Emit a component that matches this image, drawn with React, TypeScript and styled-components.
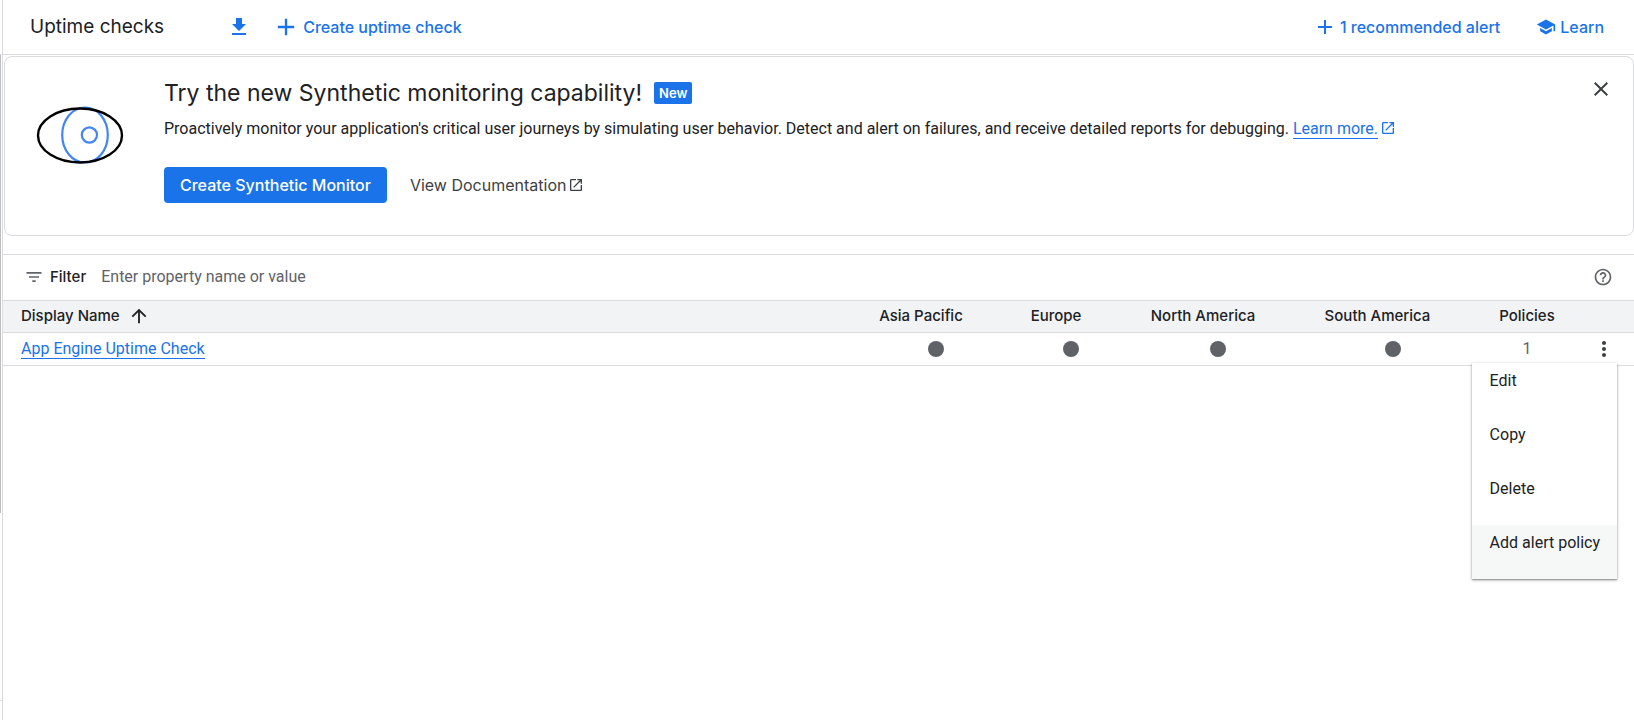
import React from "react";
import styled, { createGlobalStyle } from "styled-components";
import {
  MdAdd,
  MdArrowUpward,
  MdClose,
  MdFileDownload,
  MdFilterList,
  MdHelpOutline,
  MdMoreVert,
  MdOpenInNew,
  MdSchool,
} from "react-icons/md";

const display = `Inter, "Open Sans", sans-serif`;
const body = `Roboto, "Liberation Sans", sans-serif`;
const blue = "#1a73e8";
const ink = "#202124";
const grey = "#5f6368";
const line = "#dadce0";

const GlobalStyle = createGlobalStyle`
  *, *::before, *::after { box-sizing: border-box; }
  body { margin: 0; background: #fff; color: ${ink}; font: 400 16px/20px ${body}; }
  button, input { font: inherit; color: inherit; }
  button { border: 0; padding: 0; background: none; cursor: pointer; }
  svg { display: block; flex: none; }
`;

const Shell = styled.div`
  display: flex;
  min-height: 100vh;
`;

const NavEdge = styled.div`
  display: flex;
  flex-direction: column;
  width: 3px;
  border-right: 1px solid ${line};
`;

const NavTop = styled.div`
  height: 55px;
  border-bottom: 1px solid ${line};
`;

const NavScroll = styled.div`
  flex: 1;
  border-bottom: 1px solid ${line};
`;

const NavThumb = styled.div`
  width: 1px;
  height: 71%;
  background: #bdbdbd;
`;

const NavFoot = styled.div`
  height: 19px;
`;

const Main = styled.main`
  flex: 1;
  min-width: 0;
`;

const Toolbar = styled.header`
  display: flex;
  align-items: center;
  height: 55px;
  padding: 0 30px 0 27px;
  border-bottom: 1px solid ${line};
`;

const PageTitle = styled.h1`
  margin: 0 63px 0 0;
  font: 400 19px/24px ${display};
`;

const ToolButton = styled.button<{ $gap?: number; $before?: number }>`
  display: flex;
  align-items: center;
  gap: ${(p) => p.$gap ?? 8}px;
  margin-left: ${(p) => p.$before ?? 0}px;
  color: ${blue};
  font: 500 16px/24px ${display};
`;

const Spacer = styled.div`
  flex: 1;
`;

const Banner = styled.section`
  display: flex;
  align-items: flex-start;
  min-height: 180px;
  margin: 1px 0 18px 1px;
  padding: 20px 20px 31px 30px;
  border: 1px solid ${line};
  border-radius: 8px;
`;

const Art = styled.svg`
  margin: 28px 39px 0 0;
`;

const BannerBody = styled.div`
  flex: 1;
`;

const BannerHeading = styled.div`
  display: flex;
  align-items: center;
  gap: 12px;
`;

const BannerTitle = styled.h2`
  margin: 0;
  font: 400 23px/32px ${display};
`;

const Badge = styled.span`
  padding: 0 5px;
  border-radius: 2px;
  background: ${blue};
  color: #fff;
  font: 600 13px/22px ${display};
`;

const BannerText = styled.p`
  margin: 10px 0 28px;
`;

const TextLink = styled.a`
  display: inline-block;
  border-bottom: 1px solid ${blue};
  color: ${blue};
  line-height: 19px;
  text-decoration: none;
`;

const ExternalMark = styled(MdOpenInNew)`
  display: inline-block;
  margin-left: 2px;
  vertical-align: -2px;
  color: ${blue};
`;

const Actions = styled.div`
  display: flex;
  align-items: center;
  gap: 23px;
`;

const PrimaryButton = styled.button`
  height: 36px;
  padding: 0 16px;
  border-radius: 4px;
  background: ${blue};
  color: #fff;
  font: 500 16px/24px ${display};
`;

const PlainLink = styled.a`
  display: flex;
  align-items: center;
  gap: 2px;
  color: #3c4043;
  font: 400 16px/24px ${display};
  text-decoration: none;
`;

const IconButton = styled.button<{ $color?: string }>`
  display: flex;
  color: ${(p) => p.$color ?? "#3c4043"};
`;

const FilterBar = styled.div`
  display: flex;
  align-items: center;
  height: 46px;
  padding: 0 21px 2px;
  border-top: 1px solid ${line};
`;

const FilterLabel = styled.label`
  display: flex;
  align-items: center;
  gap: 6px;
  font: 500 15px/24px ${display};

  svg { color: ${grey}; }
`;

const FilterInput = styled.input`
  flex: 1;
  margin-left: 15px;
  padding: 0;
  border: 0;
  outline: 0;
  background: none;

  &::placeholder { color: ${grey}; opacity: 1; }
`;

const Table = styled.table`
  width: 100%;
  table-layout: fixed;
  border-collapse: collapse;
`;

const HeadCell = styled.th<{ $width?: number; $first?: boolean; $sortable?: boolean }>`
  width: ${(p) => (p.$width ? `${p.$width}px` : "auto")};
  height: 32px;
  padding: 0 ${(p) => (p.$sortable ? 30 : 0)}px 2px ${(p) => (p.$first ? 18 : 0)}px;
  border-top: 1px solid ${line};
  border-bottom: 1px solid ${line};
  background: #f1f3f4;
  font: 500 15px/20px ${display};
  text-align: ${(p) => (p.$first ? "left" : "center")};
  white-space: nowrap;
`;

const SortLabel = styled.button`
  display: flex;
  align-items: center;
  gap: 8px;
`;

const Cell = styled.td<{ $first?: boolean }>`
  height: 33px;
  padding: 0 0 1px ${(p) => (p.$first ? 18 : 0)}px;
  border-bottom: 1px solid ${line};
  color: ${grey};
  text-align: ${(p) => (p.$first ? "left" : "center")};
`;

const Dot = styled.span`
  display: block;
  width: 16px;
  height: 16px;
  margin: 0 auto;
  border-radius: 50%;
  background: ${grey};
`;

const MenuAnchor = styled.div`
  position: relative;
  display: flex;
  justify-content: center;
`;

const Menu = styled.div`
  position: absolute;
  top: 26px;
  right: 17px;
  z-index: 1;
  background: #fff;
  box-shadow: 0 1px 3px rgba(0, 0, 0, 0.35), 0 1px 1px rgba(0, 0, 0, 0.2);
`;

const MenuItem = styled.button<{ $active?: boolean }>`
  display: block;
  width: 100%;
  height: 54px;
  padding: 0 17px 18px 18px;
  background: ${(p) => (p.$active ? "#f6f8f8" : "#fff")};
  color: ${ink};
  text-align: left;
  white-space: nowrap;
`;

const regions = [
  { name: "Asia Pacific", width: 150 },
  { name: "Europe", width: 120 },
  { name: "North America", width: 174 },
  { name: "South America", width: 175 },
];

const menuItems = ["Edit", "Copy", "Delete", "Add alert policy"];

const EyeArt = () => (
  <Art width="90" height="60" viewBox="0 0 90 60" fill="none" aria-hidden="true">
    <ellipse cx="50" cy="30" rx="22.8" ry="27.5" stroke="#4285f4" strokeWidth="2.2" />
    <circle cx="54.4" cy="30" r="7.6" stroke="#4285f4" strokeWidth="2.2" />
    <ellipse cx="45" cy="30.5" rx="42" ry="27" stroke="#000" strokeWidth="2.4" />
  </Art>
);

export default function App() {
  return (
    <>
      <GlobalStyle />
      <Shell>
        <NavEdge>
          <NavTop />
          <NavScroll>
            <NavThumb />
          </NavScroll>
          <NavFoot />
        </NavEdge>
        <Main>
          <Toolbar>
            <PageTitle>Uptime checks</PageTitle>
            <ToolButton aria-label="Download">
              <MdFileDownload size={24} />
            </ToolButton>
            <ToolButton $gap={3} $before={21}>
              <MdAdd size={28} />
              Create uptime check
            </ToolButton>
            <Spacer />
            <ToolButton $gap={3}>
              <MdAdd size={24} />
              <span>1 recommended alert</span>
            </ToolButton>
            <ToolButton $gap={4} $before={36}>
              <MdSchool size={20} />
              Learn
            </ToolButton>
          </Toolbar>

          <Banner>
            <EyeArt />
            <BannerBody>
              <BannerHeading>
                <BannerTitle>Try the new Synthetic monitoring capability!</BannerTitle>
                <Badge>New</Badge>
              </BannerHeading>
              <BannerText>
                Proactively monitor your application's critical user journeys by simulating user
                behavior. Detect and alert on failures, and receive detailed reports for debugging.{" "}
                <TextLink href="#learn">Learn more.</TextLink>
                <ExternalMark size={16} />
              </BannerText>
              <Actions>
                <PrimaryButton>Create Synthetic Monitor</PrimaryButton>
                <PlainLink href="#docs">
                  View Documentation
                  <MdOpenInNew size={16} />
                </PlainLink>
              </Actions>
            </BannerBody>
            <IconButton aria-label="Dismiss">
              <MdClose size={24} />
            </IconButton>
          </Banner>

          <FilterBar>
            <FilterLabel htmlFor="filter">
              <MdFilterList size={20} />
              Filter
            </FilterLabel>
            <FilterInput id="filter" placeholder="Enter property name or value" />
            <IconButton aria-label="Help" $color={grey}>
              <MdHelpOutline size={20} />
            </IconButton>
          </FilterBar>

          <Table>
            <thead>
              <tr>
                <HeadCell $first>
                  <SortLabel>
                    Display Name
                    <MdArrowUpward size={22} />
                  </SortLabel>
                </HeadCell>
                {regions.map((r) => (
                  <HeadCell key={r.name} $width={r.width} $sortable>
                    {r.name}
                  </HeadCell>
                ))}
                <HeadCell $width={94}>Policies</HeadCell>
                <HeadCell $width={60} aria-label="Actions" />
              </tr>
            </thead>
            <tbody>
              <tr>
                <Cell $first>
                  <TextLink href="#check">App Engine Uptime Check</TextLink>
                </Cell>
                {regions.map((r) => (
                  <Cell key={r.name}>
                    <Dot />
                  </Cell>
                ))}
                <Cell>1</Cell>
                <Cell>
                  <MenuAnchor>
                    <IconButton aria-label="More actions">
                      <MdMoreVert size={24} />
                    </IconButton>
                    <Menu>
                      {menuItems.map((item, i) => (
                        <MenuItem key={item} $active={i === menuItems.length - 1}>
                          {item}
                        </MenuItem>
                      ))}
                    </Menu>
                  </MenuAnchor>
                </Cell>
              </tr>
            </tbody>
          </Table>
        </Main>
      </Shell>
    </>
  );
}
